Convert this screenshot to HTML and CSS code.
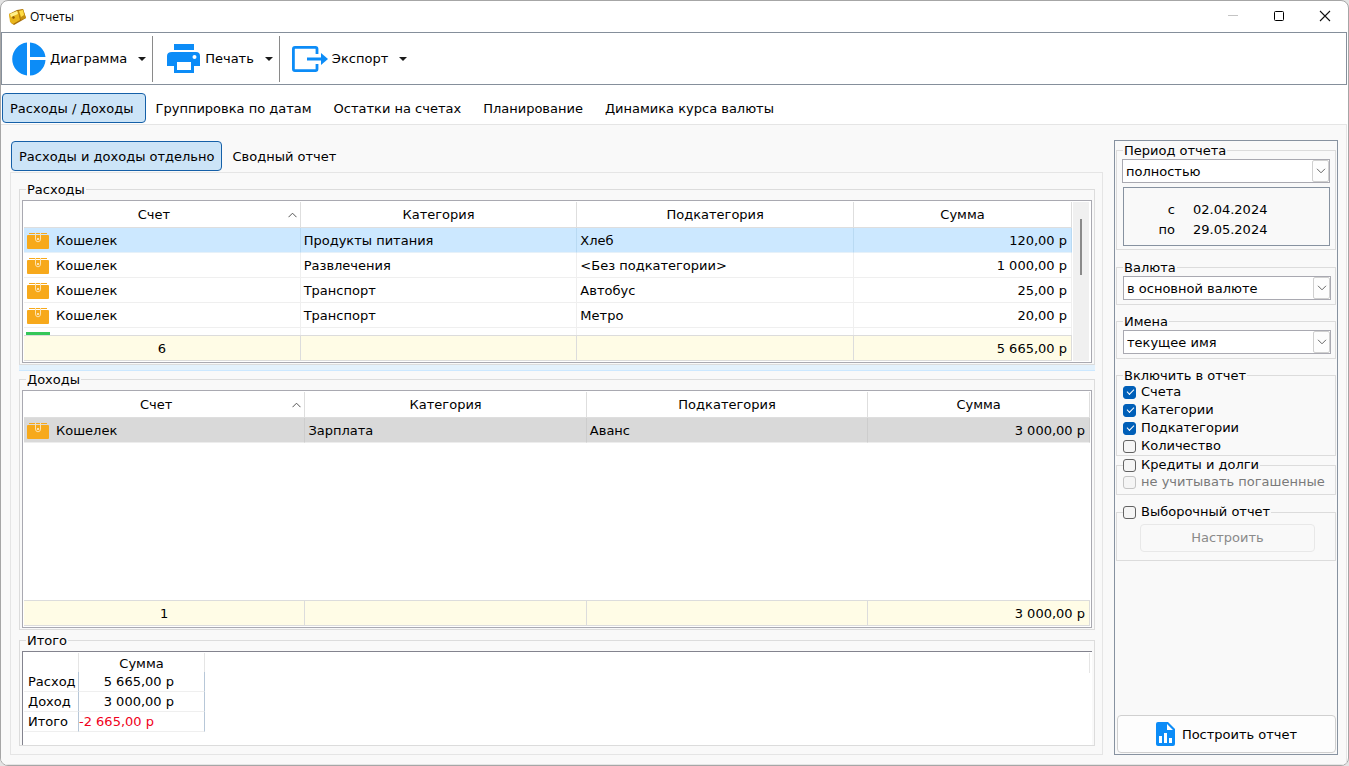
FILE: index.html
```html
<!DOCTYPE html>
<html lang="ru">
<head>
<meta charset="utf-8">
<title>Отчеты</title>
<link rel="stylesheet" href="styles.css">
</head>
<body>
<svg class="defs" width="0" height="0" aria-hidden="true">
  <symbol id="purse" viewBox="0 0 22 16">
    <path d="M2 0h18v1H2z" fill="#f7a91b"/>
    <rect y="2" width="22" height="14" rx="1" fill="#f7a91b"/>
    <path d="M8.500 0v6a2.500 2.800 0 0 0 5 0V0" fill="none" stroke="#fde3b0" stroke-width="1"/>
    <rect x="10" y="5" width="2" height="2" fill="#fde3b0"/>
  </symbol>
  <symbol id="sort" viewBox="0 0 9 6"><path d="M.5 5.2l4-4 4 4" fill="none" stroke="#555"/></symbol>
  <symbol id="chev" viewBox="0 0 10 6"><path d="M1 .8l4 4 4-4" fill="none" stroke="#666"/></symbol>
  <symbol id="caret" viewBox="0 0 8 4"><path d="M0 0h8L4 4z" fill="#1a1a1a"/></symbol>
</svg>
<div class="window">
  <header class="titlebar">
    <svg class="app-icon" width="17" height="16" viewBox="0 0 17 16">
      <path d="M0 5l8-4 6-1 3 9-5 3-7 4-3-2z" fill="#a86f08"/>
      <path d="M0 5l9-3 2 9-7 4-3-2z" fill="#e8b51c"/>
      <path d="M1 5l7-3 1 3-7 3z" fill="#fff08a"/>
      <path d="M9 2l5-2 3 9-5 2z" fill="#c58f10"/>
      <path d="M10 2l4-1 1 5-3 2z" fill="#ffdc45"/>
      <path d="M3 8l2-1 1 2-2 1z" fill="#8f5a05"/>
    </svg>
    <h1 class="title">Отчеты</h1>
    <div class="win-controls">
      <button type="button" aria-label="Свернуть" disabled><svg width="12" height="12" viewBox="0 0 12 12"><path d="M1 5.500h10" stroke="#c4c4c4"/></svg></button>
      <button type="button" aria-label="Развернуть"><svg width="12" height="12" viewBox="0 0 12 12"><rect x="1.500" y="1.500" width="9" height="9" rx="1" fill="none" stroke="#000"/></svg></button>
      <button type="button" aria-label="Закрыть"><svg width="12" height="12" viewBox="0 0 12 12"><path d="M1 1l10 10M11 1L1 11" stroke="#111" stroke-width="1.100"/></svg></button>
    </div>
  </header>

  <div class="toolbar">
    <button type="button" class="tool">
      <svg width="34" height="34" viewBox="0 0 34 34" fill="#0c8cf7"><path d="M15 .5v33A16.600 16.600 0 0 1 15 .5zM18 .5A16.600 16.600 0 0 1 33.500 15H18zM18 18h15.500A16.600 16.600 0 0 1 18 33.500z"/></svg>
      <span>Диаграмма</span><svg class="caret" width="8" height="4"><use href="#caret"/></svg>
    </button>
    <button type="button" class="tool">
      <svg width="34" height="30" viewBox="0 0 34 30"><path d="M7 0h20v6H7zM5 8h24q4 0 4 4v10h-6v7H7v-7H0V12q0-4 5-4z" fill="#0c8cf7"/><path d="M10 18h14v8H10z" fill="#fff"/><circle cx="27.500" cy="13" r="2" fill="#fff"/></svg>
      <span>Печать</span><svg class="caret" width="8" height="4"><use href="#caret"/></svg>
    </button>
    <button type="button" class="tool">
      <svg width="36" height="26" viewBox="0 0 36 26"><path d="M25 8V3q0-1.600-1.600-1.600H3Q1.400 1.400 1.400 3v20q0 1.600 1.600 1.600h20.400Q25 24.600 25 23v-5M15 13h16" fill="none" stroke="#0c8cf7" stroke-width="2.800"/><path d="M29 7l7 6-7 6z" fill="#0c8cf7"/></svg>
      <span>Экспорт</span><svg class="caret" width="8" height="4"><use href="#caret"/></svg>
    </button>
  </div>

  <nav class="tabs">
    <button type="button" class="tab active">Расходы / Доходы</button>
    <button type="button" class="tab">Группировка по датам</button>
    <button type="button" class="tab">Остатки на счетах</button>
    <button type="button" class="tab">Планирование</button>
    <button type="button" class="tab">Динамика курса валюты</button>
  </nav>

  <div class="page">
    <main class="content">
      <nav class="tabs subtabs">
        <button type="button" class="tab active">Расходы и доходы отдельно</button>
        <button type="button" class="tab">Сводный отчет</button>
      </nav>
      <div class="panel">
        <fieldset class="group expenses">
          <legend>Расходы</legend>
          <div class="grid-box">
            <div class="grid-main">
              <div class="grid-view">
                <table class="grid">
                  <colgroup><col class="c-wide"><col class="c-wide"><col class="c-wide"><col></colgroup>
                  <thead><tr><th><div class="sorted"><span>Счет</span><svg width="9" height="6"><use href="#sort"/></svg></div></th><th>Категория</th><th>Подкатегория</th><th>Сумма</th></tr></thead>
                  <tbody>
                    <tr class="selected"><td><svg class="purse"><use href="#purse"/></svg>Кошелек</td><td>Продукты питания</td><td>Хлеб</td><td>120,00 р</td></tr>
                    <tr><td><svg class="purse"><use href="#purse"/></svg>Кошелек</td><td>Развлечения</td><td>&lt;Без подкатегории&gt;</td><td>1 000,00 р</td></tr>
                    <tr><td><svg class="purse"><use href="#purse"/></svg>Кошелек</td><td>Транспорт</td><td>Автобус</td><td>25,00 р</td></tr>
                    <tr><td><svg class="purse"><use href="#purse"/></svg>Кошелек</td><td>Транспорт</td><td>Метро</td><td>20,00 р</td></tr>
                    <tr class="partial"><td><span class="card"></span></td><td></td><td></td><td></td></tr>
                  </tbody>
                </table>
              </div>
              <table class="grid totals">
                <colgroup><col class="c-wide"><col class="c-wide"><col class="c-wide"><col></colgroup>
                <tbody><tr><td>6</td><td></td><td></td><td>5 665,00 р</td></tr></tbody>
              </table>
            </div>
            <div class="scrollbar"><div class="thumb"></div></div>
          </div>
        </fieldset>
        <div class="splitter"></div>
        <fieldset class="group incomes">
          <legend>Доходы</legend>
          <div class="grid-box">
            <div class="grid-main">
              <div class="grid-view">
                <table class="grid">
                  <colgroup><col class="c-wide"><col class="c-wide"><col class="c-wide"><col></colgroup>
                  <thead><tr><th><div class="sorted"><span>Счет</span><svg width="9" height="6"><use href="#sort"/></svg></div></th><th>Категория</th><th>Подкатегория</th><th>Сумма</th></tr></thead>
                  <tbody>
                    <tr class="inactive"><td><svg class="purse"><use href="#purse"/></svg>Кошелек</td><td>Зарплата</td><td>Аванс</td><td>3 000,00 р</td></tr>
                  </tbody>
                </table>
              </div>
              <table class="grid totals">
                <colgroup><col class="c-wide"><col class="c-wide"><col class="c-wide"><col></colgroup>
                <tbody><tr><td>1</td><td></td><td></td><td>3 000,00 р</td></tr></tbody>
              </table>
            </div>
          </div>
        </fieldset>
        <fieldset class="group summary">
          <legend>Итого</legend>
          <div class="summary-box">
            <table class="sum-table">
              <thead><tr><td></td><th>Сумма</th></tr></thead>
              <tbody>
                <tr><th>Расход</th><td>5 665,00 р</td></tr>
                <tr><th>Доход</th><td>3 000,00 р</td></tr>
                <tr class="negative"><th>Итого</th><td>-2 665,00 р</td></tr>
              </tbody>
            </table>
            <div class="header-end"></div>
          </div>
        </fieldset>
      </div>
    </main>

    <aside class="side">
      <fieldset class="group period">
        <legend><label for="period">Период отчета</label></legend>
        <div class="combo"><select id="period"><option>полностью</option></select><span class="drop"><svg width="10" height="6"><use href="#chev"/></svg></span></div>
        <dl class="dates"><dt>с</dt><dd>02.04.2024</dd><dt>по</dt><dd>29.05.2024</dd></dl>
      </fieldset>
      <fieldset class="group short">
        <legend><label for="currency">Валюта</label></legend>
        <div class="combo"><select id="currency"><option>в основной валюте</option></select><span class="drop"><svg width="10" height="6"><use href="#chev"/></svg></span></div>
      </fieldset>
      <fieldset class="group short">
        <legend><label for="names">Имена</label></legend>
        <div class="combo"><select id="names"><option>текущее имя</option></select><span class="drop"><svg width="10" height="6"><use href="#chev"/></svg></span></div>
      </fieldset>
      <fieldset class="group include">
        <legend>Включить в отчет</legend>
        <label class="check"><input type="checkbox" checked>Счета</label>
        <label class="check"><input type="checkbox" checked>Категории</label>
        <label class="check"><input type="checkbox" checked>Подкатегории</label>
        <label class="check"><input type="checkbox">Количество</label>
      </fieldset>
      <fieldset class="group loans">
        <legend><label class="check"><input type="checkbox">Кредиты и долги</label></legend>
        <label class="check disabled"><input type="checkbox" disabled>не учитывать погашенные</label>
      </fieldset>
      <fieldset class="group custom">
        <legend><label class="check"><input type="checkbox">Выборочный отчет</label></legend>
        <div class="btn-row"><button type="button" class="btn" disabled>Настроить</button></div>
      </fieldset>
      <button type="button" class="build">
        <svg width="19" height="24" viewBox="0 0 19 24"><path d="M2 0h10l7 7v15q0 2-2 2H2q-2 0-2-2V2q0-2 2-2z" fill="#0c8cf7"/><path d="M11 2v6h6zM3 14h3v7H3zM8 11h3v10H8zM13 16h3v5h-3z" fill="#fff"/></svg>
        <span>Построить отчет</span>
      </button>
    </aside>
  </div>
</div>
</body>
</html>
```
FILE: styles.css
```css
* { box-sizing: border-box; }
html, body { height: 100%; }
body {
  margin: 0;
  background: #e4e4e4;
  color: #000;
  font: 13px/16px Verdana, "DejaVu Sans", sans-serif;
}
button, select, input { font: inherit; color: inherit; margin: 0; }
button { background: none; border: 0; padding: 0; }
svg { display: block; flex: none; }
.defs { position: absolute; }

.window {
  display: flex;
  flex-direction: column;
  min-height: 100vh;
  border: 1px solid #a6a6a6;
  border-radius: 8px;
  background: #fff;
  overflow: hidden;
}

.titlebar { display: flex; align-items: center; height: 31px; padding-left: 8px; }
.title { margin: 0 auto 0 4px; font: 12px/16px "Open Sans", sans-serif; }
.win-controls { display: flex; }
.win-controls button { display: flex; align-items: center; justify-content: center; width: 46px; height: 31px; padding-bottom: 1px; }

.toolbar {
  display: flex;
  align-items: center;
  height: 53px;
  margin-right: 1px;
  border: 1px solid #858f9b;
}
.tool { display: flex; align-items: center; gap: 4px; height: 46px; padding: 0 6px 0 10px; }
.tool span, .build span { padding-top: 1px; }
.tool + .tool { border-left: 1px solid #8a8a8a; padding-left: 14px; }
.tool + .tool + .tool { padding-left: 12px; }
.caret { margin-left: 7px; }

.tabs { display: flex; height: 39px; padding: 8px 0 0 1px; }
.tab { height: 30px; padding: 2px 10px 0; border: 1px solid transparent; border-radius: 4px; white-space: nowrap; }
.tab.active { padding: 2px 11px 0 7px; border-color: #1560a8; background: #cce4f7; }
.tab.active + .tab { padding-left: 9px; }

.page {
  flex: 1;
  display: flex;
  gap: 11px;
  padding: 15px 8px 9px 9px;
  margin-right: 1px;
  border: solid #e5e5e5;
  border-width: 1px 1px 1px 0;
  background: #f9f9f9;
}
.content { flex: 1; display: flex; flex-direction: column; min-width: 0; padding-top: 1px; }
.subtabs { height: 31px; padding: 0 0 0 1px; }
.subtabs .active { padding-right: 7px; }
.panel {
  flex: 1;
  display: flex;
  flex-direction: column;
  padding: 8px 7px 8px 8px;
  border: 1px solid #e5e5e5;
}

.group { min-width: 0; margin: 0; padding: 0; border: 1px solid #dcdcdc; }
.group legend { height: 16px; margin-left: 4px; padding: 0 1px; line-height: 18px; }
.panel .group { display: flex; flex-direction: column; padding: 3px 2px 1px; }
.expenses { height: 184px; }
.incomes { flex: 1; }
.summary { height: 114px; margin-top: 2px; }
.splitter { height: 6px; border-bottom: 1px solid #cce8ff; background: #e3f1fc; }

.grid-box { flex: 1; display: flex; min-height: 0; padding: 1px; border: 1px solid #a9a9b1; background: #fff; }
.expenses .grid-box { flex: none; height: 163px; }
.incomes .grid-box { height: 100%; }
.grid-main { flex: 1; display: flex; flex-direction: column; min-width: 0; min-height: 0; }
.grid-view { flex: 1; min-height: 0; overflow: hidden; }
.grid { width: 100%; table-layout: fixed; border-collapse: separate; border-spacing: 0; }
.c-wide { width: 26.4%; }
.grid th { height: 26px; padding: 0; border: solid #dedede; border-width: 0 1px 1px 0; font-weight: normal; }
.grid td { height: 25px; padding: 2px 3px 0; border: solid #efefef; border-width: 0 1px 1px 0; white-space: nowrap; }
.grid td:last-child { padding-right: 4px; text-align: right; }
.sorted { display: flex; align-items: center; gap: 4px; padding-right: 3px; }
.sorted span { flex: 1; }
.purse { display: inline-block; width: 22px; height: 16px; margin: -2px 7px 0 0; vertical-align: middle; }
.grid .selected td { background: #cce8ff; border-color: #b9daf3; border-bottom-color: #e6f1f9; }
.grid .inactive td { background: #d9d9d9; border-color: #cdcdcd; border-bottom-color: #ededed; }
.grid .partial td { vertical-align: top; padding: 4px 2px 0; }
.card { display: block; width: 24px; height: 16px; background: #35c759; }
.grid.totals td { height: 26px; border-color: #dcdcdc; border-top-width: 1px; background: #fffce6; }
.totals td:first-child { text-align: center; }
.scrollbar { width: 16px; margin: 0 1px; background: #f0f0f0; }
.thumb { width: 2px; height: 56px; margin: 17px 0 0 7px; background: #8a8a8a; }

.summary-box {
  display: flex;
  justify-content: space-between;
  align-items: flex-start;
  height: 94px;
  padding: 1px;
  border: solid #83838e;
  border-width: 1px 0 0 1px;
  background: #fff;
}
.sum-table { border-collapse: separate; border-spacing: 0; }
.sum-table th, .sum-table td { height: 20px; padding: 0; border-bottom: 1px solid #efefef; font-weight: normal; text-align: left; white-space: nowrap; }
.sum-table tbody th { width: 55px; padding-left: 4px; border-right: 1px solid #b7c7d8; }
.sum-table tbody td { width: 126px; padding-right: 30px; border-right: 1px solid #b7c7d8; text-align: right; }
.sum-table thead th, .sum-table thead td { height: 19px; padding-top: 2px; border: 0; border-right: 1px solid #e5e5e5; text-align: center; }
.sum-table .negative td { padding: 0; color: #f00020; text-align: left; }
.header-end { width: 1px; height: 20px; margin-right: 1px; background: #e5e5e5; }

.side { display: flex; flex-direction: column; width: 224px; padding: 1px; border: 1px solid #8792a0; }
.side .group { padding: 1px 5px 4px 6px; }
.side .group legend { margin-left: 0; }
.side .period { height: 108px; padding-left: 5px; }
.side .period legend { margin-left: 1px; }
.side .short { height: 46px; margin-top: 9px; padding-right: 4px; }
.side .short:nth-of-type(3) { margin-top: 8px; }
.combo { position: relative; }
.combo select { appearance: none; width: 100%; height: 24px; padding: 1px 24px 0 3px; border: 1px solid #a9a9b1; border-radius: 0; background: #fff; }
.drop {
  position: absolute;
  top: 1px;
  right: 1px;
  bottom: 1px;
  width: 17px;
  display: flex;
  align-items: center;
  justify-content: center;
  border: 1px solid #d0d0d0;
  border-radius: 2px;
  background: #fdfdfd;
  pointer-events: none;
}
.dates {
  display: grid;
  grid-template-columns: 51px 1fr;
  align-content: start;
  column-gap: 18px;
  height: 59px;
  margin: 4px 0 0 1px;
  padding-top: 12px;
  border: 1px solid #8792a0;
  line-height: 20px;
}
.dates dt { text-align: right; }
.dates dd { margin: 0; }
.side .include { height: 88px; margin-top: 9px; padding: 0 6px; }
.side .include legend { height: 15px; line-height: 16px; }
.check { display: flex; align-items: center; gap: 5px; height: 18px; white-space: nowrap; }
.check input { position: relative; appearance: none; width: 13px; height: 13px; border: 1px solid #626262; border-radius: 3px; background: #f5f5f5; }
legend .check { height: 16px; }
.side .group legend:has(.check) { padding-left: 0; }
.check input:checked { border-color: #005fb8; background: #005fb8; }
.check input:checked::after {
  content: "";
  position: absolute;
  left: 3px;
  top: 2px;
  width: 6px;
  height: 3px;
  border: solid #fff;
  border-width: 0 0 1px 1px;
  transform: rotate(-45deg);
}
.check.disabled { color: #7a7a7a; }
.check.disabled input { border-color: #c4c4c4; }
.side .loans { height: 38px; margin-top: 1px; padding: 0 6px; }
.side .custom { height: 57px; margin-top: 9px; padding: 4px 6px; }
.btn-row { padding: 0 14px 0 17px; }
.btn { display: block; width: 100%; height: 28px; border: 1px solid #e8e8e8; border-radius: 4px; color: #8a8a8a; }
.build {
  display: flex;
  align-items: center;
  justify-content: center;
  gap: 7px;
  height: 38px;
  margin: auto 0 0 1px;
  border: 1px solid #d0d0d0;
  border-radius: 4px;
  background: #fdfdfd;
}
```
